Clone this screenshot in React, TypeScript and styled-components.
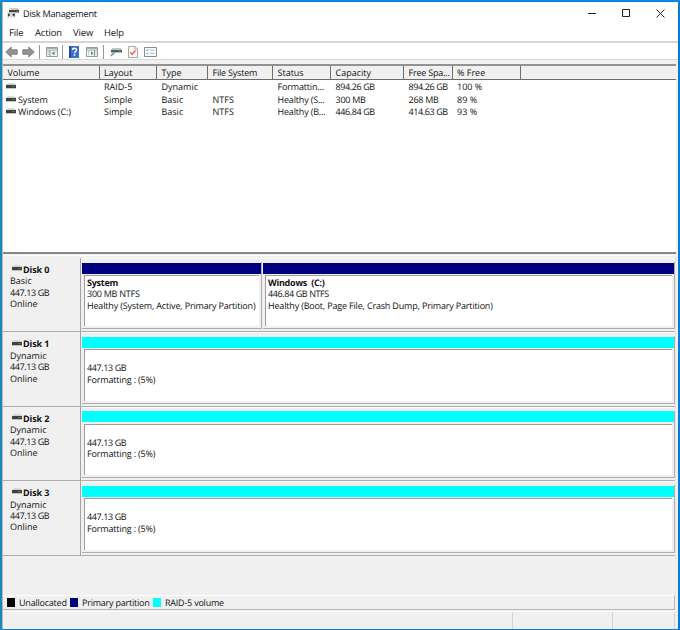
import React from "react";
import styled, { createGlobalStyle } from "styled-components";

const Global = createGlobalStyle`
  * { box-sizing: border-box; }
  html, body { margin: 0; padding: 0; overflow: hidden; }
  body { font-family: "Open Sans", "Noto Sans", sans-serif; font-size: 9px; color: #111; text-rendering: geometricPrecision; }
`;

const Frame = styled.div`
  width: 680px;
  height: 630px;
  padding: 1px 2px 1px 2px;
  background: linear-gradient(90deg, #1f87b8 0 2px, #067bd8 2px 100%);
  border-top: 1px solid #078fe8;
`;

const Window = styled.div`
  display: flex;
  flex-direction: column;
  width: 676px;
  height: 627px;
  background: #f0f0f0;
  border-left: 1px solid #b4bcc0;
`;

const TitleBar = styled.div`
  display: flex;
  flex: none;
  align-items: center;
  height: 22px;
  padding-left: 4px;
  background: #fff;
`;

const Title = styled.span`
  flex: 1;
  margin-left: 4px;
  font-size: 9.2px;
  letter-spacing: -0.24px;
`;

const Caption = styled.div`
  display: grid;
  grid-template-columns: repeat(3, 34px);
  justify-items: center;
  margin-right: 1px;
`;

const MenuBar = styled.div`
  display: flex;
  flex: none;
  height: 17px;
  line-height: 18px;
  padding-left: 6px;
  background: #fff;
  font-size: 9.4px;
  letter-spacing: -0.1px;
`;

const MenuItem = styled.span<{ $w: number }>`
  width: ${(p) => p.$w}px;
`;

const ToolBar = styled.div`
  display: flex;
  flex: none;
  align-items: center;
  height: 19px;
  padding: 1px 0 0 2px;
  background: #fff;
  border-top: 2px solid #d6d6d6;
  border-bottom: 1px solid #d9d9d9;
`;

const Tool = styled.svg<{ $gap: number }>`
  flex: none;
  margin-left: ${(p) => p.$gap}px;
`;

const ToolRule = styled.div<{ $gap: number }>`
  width: 1px;
  height: 14px;
  margin-left: ${(p) => p.$gap}px;
  background: #969696;
`;

const VolumeList = styled.div`
  flex: none;
  height: 190px;
  margin: 4px 2px 0 0;
  background: #fff;
  border-top: 2px solid #929292;
  border-bottom: 2px solid #878787;
`;

const columns = "96.5px 57.5px 51px 65px 58px 73px 48.5px 68.5px 1fr";

const ListHeader = styled.div`
  display: grid;
  grid-template-columns: ${columns};
  height: 14px;
  background: #f0f0f0;
  border-bottom: 1px solid #6b6b6b;
  line-height: 14px;
`;

const HeadCell = styled.span<{ $s: number }>`
  padding-left: 4.5px;
  border-right: 1px solid #707070;
  white-space: nowrap;
  letter-spacing: ${(p) => p.$s}px;
  &:last-child { border-right: 0; }
`;

const ListRow = styled.div`
  display: grid;
  grid-template-columns: ${columns};
  height: 12.7px;
  line-height: 13px;
`;

const Cell = styled.span<{ $s: number }>`
  padding-left: 4.5px;
  white-space: nowrap;
  letter-spacing: ${(p) => p.$s}px;
`;

const NameCell = styled.span`
  display: flex;
  align-items: center;
  gap: 2.5px;
  padding-left: 2.5px;
  letter-spacing: -0.1px;
  svg { margin-top: -1px; }
`;

const DiskPane = styled.div`
  flex: none;
  height: 340px;
  margin: 1px 2px 0 0;
  padding-top: 2px;
  border-top: 1px solid #fafafa;
  border-right: 1px solid #e8e8e8;
`;

const DiskRow = styled.div`
  display: grid;
  grid-template-columns: 78px 1fr;
  height: 74.4px;
  border-bottom: 1px solid #adadad;
`;

const DiskLabel = styled.div`
  padding: 6px 0 0 7px;
  border-right: 1px solid #a3a3a3;
  line-height: 11.4px;
`;

const Line = styled.div<{ $s: number }>`
  letter-spacing: ${(p) => p.$s}px;
`;

const DiskName = styled.div`
  display: flex;
  align-items: center;
  gap: 1px;
  padding-left: 2px;
  font-weight: 700;
  letter-spacing: -0.1px;
  svg { margin-top: -3px; }
`;

const Partitions = styled.div`
  display: flex;
  gap: 1px;
  padding: 3px 0 2px 1px;
  border-top: 1px solid #fafafa;
`;

const Partition = styled.div<{ $w?: number }>`
  flex: ${(p) => (p.$w ? `0 0 ${p.$w}px` : "1")};
  min-width: 0;
  display: flex;
  flex-direction: column;
  border-right: 1px solid #adadad;
  border-bottom: 1px solid #adadad;
`;

const Stripe = styled.div<{ $c: string }>`
  height: 11px;
  margin-top: 0.5px;
  background: ${(p) => p.$c};
`;

const PartitionBody = styled.div<{ $top: number }>`
  flex: 1;
  margin: 1.5px 2px 2px 2px;
  padding: ${(p) => p.$top}px 0 0 2px;
  background: #fff;
  border-left: 1px solid #9c9c9c;
  border-top: 1px solid #9c9c9c;
  line-height: 11.4px;
  white-space: nowrap;
`;

const Strong = styled.div`
  font-weight: 700;
  white-space: pre;
  letter-spacing: -0.25px;
`;

const Legend = styled.div`
  display: flex;
  flex: none;
  align-items: center;
  height: 15px;
  margin-right: 3px;
  padding-left: 4px;
  border-top: 1px solid #fff;
  border-right: 1px solid #b5b5b5;
  border-bottom: 1px solid #b5b5b5;
`;

const LegendItem = styled.div<{ $w: number }>`
  display: flex;
  align-items: center;
  gap: 4px;
  width: ${(p) => p.$w}px;
  white-space: nowrap;
  letter-spacing: -0.22px;
`;

const Swatch = styled.span<{ $c: string }>`
  width: 8px;
  height: 9px;
  background: ${(p) => p.$c};
`;

const StatusBar = styled.div`
  display: grid;
  grid-template-columns: 509.5px 100px 1fr;
  flex: 1;
  margin-top: 1px;
  margin-right: 3px;
  border-top: 1px solid #fff;
`;

const StatusCell = styled.span`
  border-right: 1px solid #d3d3d3;
`;

const Drive = () => (
  <svg width="10" height="6" viewBox="0 0 10 6">
    <path d="M1.5 0.2h7L10 2H0z" fill="#cfd2d4" />
    <rect y="2" width="10" height="3" fill="#3c4140" />
    <rect x="6.5" y="3" width="2" height="1" fill="#35a94a" />
    <rect y="5" width="10" height="0.7" fill="#a9adad" />
  </svg>
);

const AppIcon = () => (
  <svg width="12" height="12" viewBox="0 0 12 12">
    <path d="M3 1h8l1 2H2z" fill="#c9cccd" />
    <path d="M2 3h10v2.5H2z" fill="#414545" />
    <path d="M9 3.7h2v1H9z" fill="#39a553" />
    <path d="M0 5.5h8.5V10.5H0z" fill="#dedede" />
    <path d="M1 6.5l2 1.2L1 10zM7.5 6.5L5.3 7.7 7.5 10z" fill="#4b4b4b" />
    <path d="M1 6.8h1.8v1.8H1zM5.7 6.8h1.8v1.8H5.7z" fill="#333" />
  </svg>
);

const Arrow = ({ right, gap }: { right?: boolean; gap: number }) => (
  <Tool $gap={gap} width="13" height="12" viewBox="0 0 13 12">
    <path
      d="M.7 6L6.2 1v2.7h6v4.6h-6V11z"
      transform={right ? "translate(13 0) scale(-1 1)" : undefined}
      fill="#939393"
      stroke="#777"
      strokeWidth=".8"
    />
  </Tool>
);

const PaneIcon = ({ right, gap }: { right?: boolean; gap: number }) => (
  <Tool $gap={gap} width="12" height="10" viewBox="0 0 12 10">
    <path d="M.5.5h11v9H.5z" fill="#f4f5f4" stroke="#989c9f" />
    <path d="M1 1h10v1.5H1z" fill="#a9afb5" />
    <path d="M1 3.5h10" stroke="#b9bdc0" strokeWidth=".7" />
    <path d={right ? "M8.5 3v6" : "M4 3v6"} stroke="#8f9599" />
    <path d={right ? "M2 5h1M2 7h1M9.5 5h1M9.5 7h1" : "M1.5 5h1.5M1.5 7h1.5M9.5 5h1"} stroke="#849bb1" strokeWidth=".8" />
    <path d={right ? "M5 4.2l2.7 2L5 8.2z" : "M8.5 4.2l-2.8 2 2.8 2z"} fill="#42a54c" />
  </Tool>
);

const HelpIcon = () => (
  <Tool $gap={6} width="10" height="12" viewBox="0 0 10 12">
    <rect width="10" height="12" fill="#3e6fcd" />
    <path d="M0 0h2v12H0z" fill="#264aa4" />
    <path d="M3.4 4.1c0-2.6 4.2-2.4 4.1-.1 0 1.5-2 1.5-2 3.2" fill="none" stroke="#fff" strokeWidth="1.4" />
    <rect x="4.7" y="8.4" width="1.6" height="1.5" fill="#fff" />
  </Tool>
);

const ConnectIcon = () => (
  <Tool $gap={6} width="12" height="10" viewBox="0 0 12 10">
    <path d="M2 1h9l1 2H1z" fill="#bdc6c9" />
    <path d="M1 3h11v2.4H1z" fill="#4b6265" />
    <path d="M8.5 3.5h2v1h-2z" fill="#39b253" />
    <path d="M4.5 5.5L.8 9" stroke="#7197ae" strokeWidth="1.7" />
  </Tool>
);

const CheckIcon = () => (
  <Tool $gap={6} width="10" height="12" viewBox="0 0 10 12">
    <path d="M.5.5h6.4L9.5 3v8.5h-9z" fill="#fafafa" stroke="#a5a5a5" />
    <path d="M6.8.5V3h2.7" fill="none" stroke="#a5a5a5" strokeWidth=".7" />
    <path d="M2.3 6.2l1.8 2.2 3.4-4.2" fill="none" stroke="#ef6c35" strokeWidth="1.5" />
  </Tool>
);

const OptionsIcon = () => (
  <Tool $gap={6} width="13" height="10" viewBox="0 0 13 10">
    <path d="M.5.5h12v9H.5z" fill="#fafcfd" stroke="#7f8f9c" />
    <path d="M2 3l.8.8L4.2 2M2 6.5l.8.8 1.4-1.8" fill="none" stroke="#4787b8" strokeWidth=".8" />
    <path d="M5.8 3h4.7M5.8 6.5h4.7" stroke="#9ba9b3" strokeWidth=".8" />
  </Tool>
);

// Digits are set tighter than words.
const spacing = (text: string) => {
  if (/^\d+\.\d+ GB/.test(text)) return -0.4;
  if (/^\d+ MB/.test(text)) return -0.25;
  if (/^(Healthy|Formatt)/.test(text)) return -0.17;
  if (text === "File System" || text === "Free Spa...") return -0.2;
  return 0;
};

const heads = ["Volume", "Layout", "Type", "File System", "Status", "Capacity", "Free Spa...", "% Free", ""];
const volumes = [
  ["", "RAID-5", "Dynamic", "", "Formattin...", "894.26 GB", "894.26 GB", "100 %"],
  ["System", "Simple", "Basic", "NTFS", "Healthy (S...", "300 MB", "268 MB", "89 %"],
  ["Windows (C:)", "Simple", "Basic", "NTFS", "Healthy (B...", "446.84 GB", "414.63 GB", "93 %"],
];

interface Part {
  name?: string;
  lines: string[];
  width?: number;
}

const formatting: Part[] = [{ lines: ["447.13 GB", "Formatting : (5%)"] }];
const disks: { name: string; type: string; parts: Part[] }[] = [
  {
    name: "Disk 0",
    type: "Basic",
    parts: [
      { name: "System", width: 180, lines: ["300 MB NTFS", "Healthy (System, Active, Primary Partition)"] },
      { name: "Windows  (C:)", lines: ["446.84 GB NTFS", "Healthy (Boot, Page File, Crash Dump, Primary Partition)"] },
    ],
  },
  { name: "Disk 1", type: "Dynamic", parts: formatting },
  { name: "Disk 2", type: "Dynamic", parts: formatting },
  { name: "Disk 3", type: "Dynamic", parts: formatting },
];

export default function App() {
  return (
    <Frame>
      <Global />
      <Window>
        <TitleBar>
          <AppIcon />
          <Title>Disk Management</Title>
          <Caption>
            <svg width="8" height="9" viewBox="0 0 8 9"><path d="M0 4.5h8" stroke="#222" /></svg>
            <svg width="8" height="9" viewBox="0 0 8 9"><path d="M.5.5h7v7h-7z" fill="none" stroke="#222" /></svg>
            <svg width="9" height="9" viewBox="0 0 9 9"><path d="M.5.5l8 8M8.5.5l-8 8" stroke="#222" /></svg>
          </Caption>
        </TitleBar>
        <MenuBar>
          <MenuItem $w={26}>File</MenuItem>
          <MenuItem $w={38}>Action</MenuItem>
          <MenuItem $w={31}>View</MenuItem>
          <MenuItem $w={30}>Help</MenuItem>
        </MenuBar>
        <ToolBar>
          <Arrow gap={0} />
          <Arrow gap={4} right />
          <ToolRule $gap={4} />
          <PaneIcon gap={6} />
          <ToolRule $gap={4} />
          <HelpIcon />
          <PaneIcon gap={7} right />
          <ToolRule $gap={5} />
          <ConnectIcon />
          <CheckIcon />
          <OptionsIcon />
        </ToolBar>
        <VolumeList>
          <ListHeader>
            {heads.map((h, i) => <HeadCell key={i} $s={spacing(h)}>{h}</HeadCell>)}
          </ListHeader>
          {volumes.map(([name, ...rest], i) => (
            <ListRow key={i}>
              <NameCell><Drive />{name}</NameCell>
              {rest.map((v, j) => <Cell key={j} $s={spacing(v)}>{v}</Cell>)}
            </ListRow>
          ))}
        </VolumeList>
        <DiskPane>
          {disks.map((d) => (
            <DiskRow key={d.name}>
              <DiskLabel>
                <DiskName><Drive />{d.name}</DiskName>
                <Line $s={0}>{d.type}</Line>
                <Line $s={-0.4}>447.13 GB</Line>
                <Line $s={0}>Online</Line>
              </DiskLabel>
              <Partitions>
                {d.parts.map((p, i) => (
                  <Partition key={i} $w={p.width}>
                    <Stripe $c={p.name ? "#000080" : "#00ffff"} />
                    <PartitionBody $top={p.name ? 1 : 12}>
                      {p.name && <Strong>{p.name}</Strong>}
                      {p.lines.map((l) => <Line key={l} $s={spacing(l)}>{l}</Line>)}
                    </PartitionBody>
                  </Partition>
                ))}
              </Partitions>
            </DiskRow>
          ))}
        </DiskPane>
        <Legend>
          <LegendItem $w={63}><Swatch $c="#000" />Unallocated</LegendItem>
          <LegendItem $w={83}><Swatch $c="#000080" />Primary partition</LegendItem>
          <LegendItem $w={80}><Swatch $c="#00ffff" />RAID-5 volume</LegendItem>
        </Legend>
        <StatusBar>
          <StatusCell />
          <StatusCell />
          <StatusCell />
        </StatusBar>
      </Window>
    </Frame>
  );
}
